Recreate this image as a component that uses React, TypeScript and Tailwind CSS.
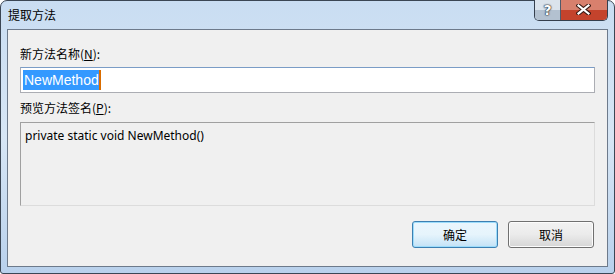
export default function App() {
  return (
    <div className="w-[615px] h-[274px] bg-white">
      <div
        className="w-[615px] h-[274px] flex flex-col rounded-t-[7px] rounded-b-[3px] border border-[#3b4654] bg-gradient-to-b from-[#c9ddf2] via-[#d7e6f5] to-[#b9d1ec] px-[6px] pb-[6px]"
        style={{ fontFamily: '"Noto Sans CJK SC", "Noto Sans", sans-serif' }}
      >
        {/* Title bar */}
        <div className="h-[28px] flex items-start justify-between">
          <span className="pl-[1px] pt-[6px] text-[12px] leading-[16px] text-black">提取方法</span>
          <div className="flex -mt-[1px] rounded-b-[5px] border border-t-0 border-[#353f4d] overflow-hidden">
            <div className="w-[26px] h-[20px] flex flex-col border-r border-[#4f5a6a] relative">
              <div className="h-[10px] bg-[#dbe3ec]" />
              <div className="h-[10px] bg-[#b3c1d0]" />
              <span
                className="absolute inset-0 flex items-center justify-center text-[14px] font-bold text-white leading-none [text-shadow:0_0_1px_#1f2833,0_0_1px_#1f2833,0_0_2px_#1f2833]"
                style={{ fontFamily: '"DejaVu Sans", sans-serif' }}
              >
                ?
              </span>
            </div>
            <div className="w-[46px] h-[20px] flex flex-col relative">
              <div className="h-[10px] bg-[#d8806d]" />
              <div className="h-[10px] bg-[#c4432c]" />
              <svg className="absolute left-[15px] top-[4px]" width="15" height="11" viewBox="0 0 15 11">
                <path d="M2.5 1.5 L12.5 9.5 M12.5 1.5 L2.5 9.5" stroke="#3a1a14" strokeWidth="4.2" strokeLinecap="square" />
                <path d="M2.5 1.5 L12.5 9.5 M12.5 1.5 L2.5 9.5" stroke="#ffffff" strokeWidth="2.2" strokeLinecap="square" />
              </svg>
            </div>
          </div>
        </div>

        {/* Client area */}
        <div className="flex-1 flex flex-col border border-[#6d7a8b] bg-[#f0f0f0] pl-[12px] pr-[12px]">
          <div className="mt-[16px] text-[12px] leading-[16px] text-black">
            新方法名称(<span className="underline">N</span>):
          </div>
          <div className="mt-[5px] h-[26px] border border-[#abadb3] border-t-[#7a9cc6] bg-white flex items-center pl-[2px] text-[14px] leading-[20px]">
            <span
              className="bg-[#3399ff] text-white text-[14px] leading-[20px] pl-[1px] border-r-2 border-[#d96c00]"
              style={{ fontFamily: '"Liberation Sans", sans-serif' }}
            >
              NewMethod
            </span>
          </div>
          <div className="mt-[7px] text-[12px] leading-[16px] text-black">
            预览方法签名(<span className="underline">P</span>):
          </div>
          <div className="mt-[6px] h-[84px] border border-[#dcdcdc] border-t-[#a0a0a0] border-l-[#a0a0a0] px-[4px] pt-[4px] text-[12px] leading-[16px]">
            <span className="text-[12px] leading-[16px] text-black" style={{ fontFamily: '"Noto Sans", sans-serif' }}>
              private static void NewMethod()
            </span>
          </div>
          <div className="mt-[15px] flex justify-end gap-[10px] pr-[1px]">
            <button className="w-[86px] h-[27px] rounded-[3px] border border-[#3c7fb1] bg-gradient-to-b from-[#eaf6fd] via-[#e6f4fc] to-[#c3e2f6] text-[12px] text-black shadow-[inset_0_0_0_1px_#9cdcfb]">
              确定
            </button>
            <button className="w-[86px] h-[27px] rounded-[3px] border border-[#707070] bg-gradient-to-b from-[#f2f2f2] via-[#ebebeb] to-[#d6d6d6] text-[12px] text-black shadow-[inset_0_0_0_1px_#fcfcfc]">
              取消
            </button>
          </div>
        </div>
      </div>
    </div>
  );
}
